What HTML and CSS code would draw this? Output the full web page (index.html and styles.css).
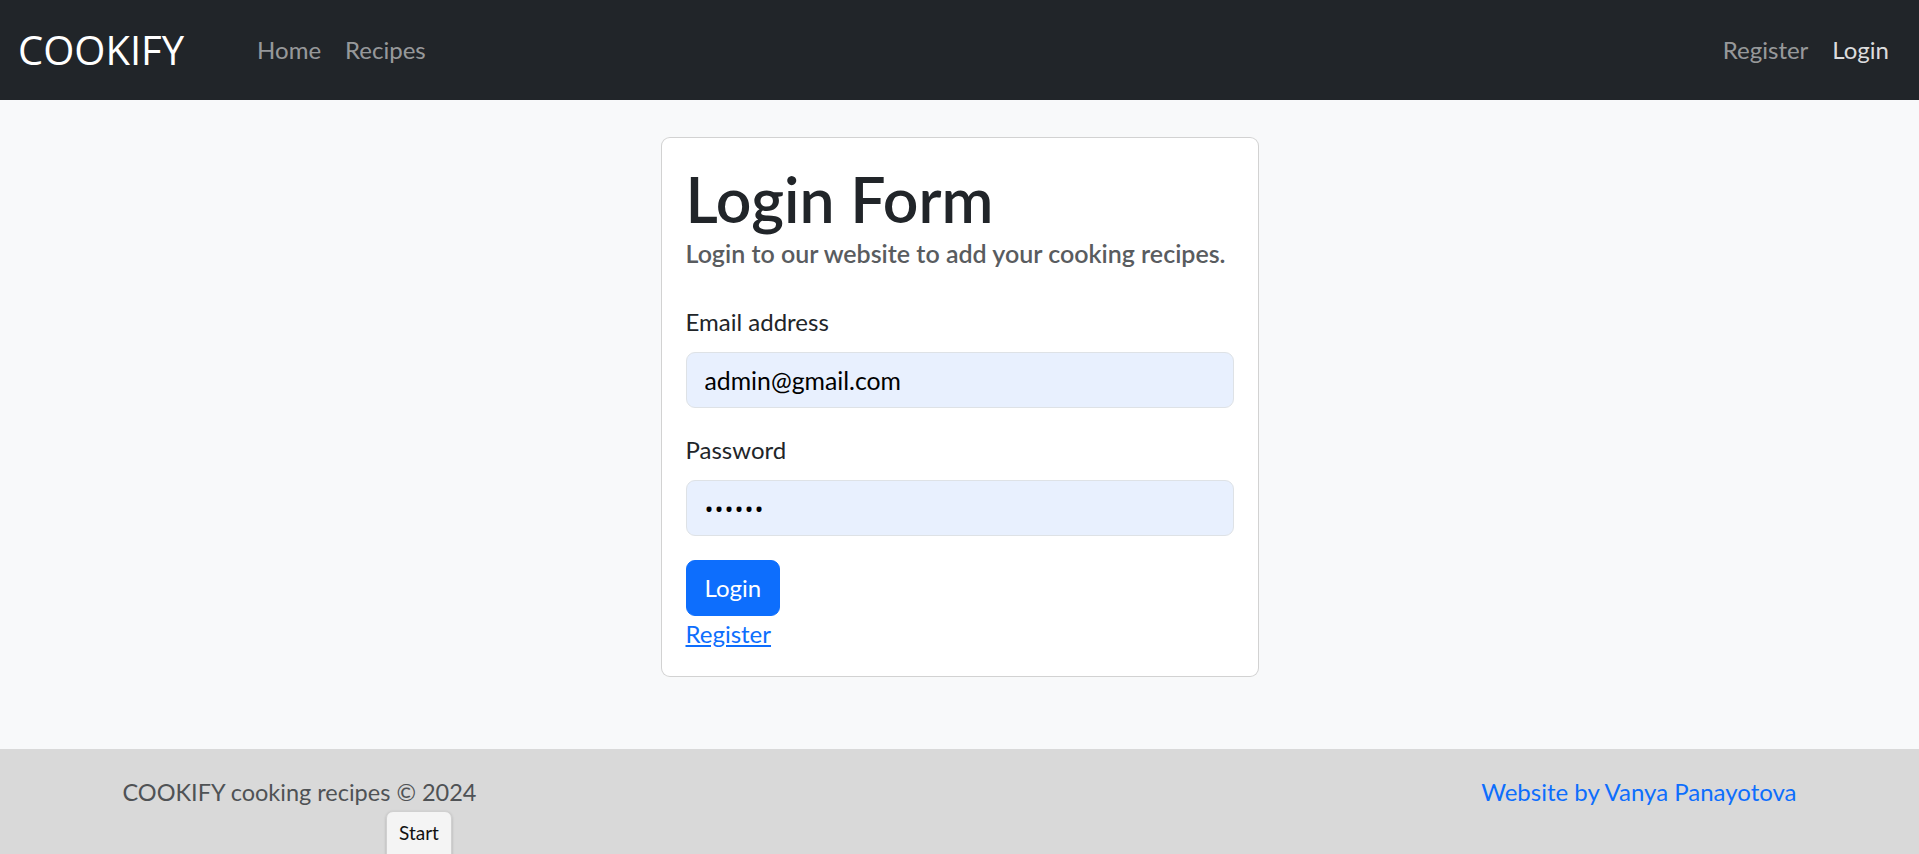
FILE: index.html
```html
<!DOCTYPE html>
<html lang="en">
<head>
<meta charset="utf-8">
<title>COOKIFY - Login</title>
<link rel="stylesheet" href="styles.css">
</head>
<body>
<nav class="navbar">
  <a class="brand" href="#">COOKIFY</a>
  <ul class="nav">
    <li><a class="nav-link" href="#">Home</a></li>
    <li><a class="nav-link" href="#">Recipes</a></li>
  </ul>
  <ul class="nav nav-right">
    <li><a class="nav-link" href="#">Register</a></li>
    <li><a class="nav-link active" href="#">Login</a></li>
  </ul>
</nav>
<main class="main">
  <div class="card">
    <h1 class="title">Login Form</h1>
    <p class="subtitle">Login to our website to add your cooking recipes.</p>
    <form class="form">
      <div class="field">
        <label class="label" for="email">Email address</label>
        <input class="input" id="email" type="email" value="admin@gmail.com">
      </div>
      <div class="field">
        <label class="label" for="password">Password</label>
        <input class="input input-password" id="password" type="password" value="123456">
      </div>
      <button class="btn" type="button">Login</button>
    </form>
    <a class="link" href="#">Register</a>
  </div>
</main>
<footer class="footer">
  <div class="footer-inner">
    <span class="footer-copy">COOKIFY cooking recipes © 2024</span>
    <a class="footer-link" href="#">Website by Vanya Panayotova</a>
  </div>
</footer>
<div class="start-btn">Start</div>
</body>
</html>
```
FILE: styles.css
```css
html, body {
  margin: 0;
  padding: 0;
}
body {
  font-family: Lato, "Open Sans", sans-serif;
  font-size: 24px;
  line-height: 36px;
  color: #212529;
  background: #f8f9fa;
  overflow: hidden;
  position: relative;
  min-height: 854px;
}
a { text-decoration: none; }

.navbar {
  height: 100px;
  box-sizing: border-box;
  background: #212529;
  display: flex;
  align-items: center;
  padding: 0 18px;
}
.brand {
  color: #fff;
  font-family: "Open Sans", sans-serif;
  font-size: 40px;
  font-weight: 400;
  line-height: 60px;
  margin-right: 61px;
}
.nav {
  list-style: none;
  margin: 0;
  padding: 0;
  display: flex;
}
.nav-right { margin-left: auto; }
.nav-link {
  display: block;
  padding: 0 12px;
  color: rgba(255, 255, 255, 0.55);
  line-height: 36px;
}
.nav-link.active { color: rgba(255, 255, 255, 0.85); }

.main {
  display: flex;
  justify-content: center;
  padding: 37px 0 72px;
}
.card {
  width: 598px;
  box-sizing: border-box;
  background: #fff;
  border: 1px solid rgba(0, 0, 0, 0.175);
  border-radius: 9px;
  padding: 25px 24px 24px;
}
.title {
  margin: 0;
  font-size: 62.5px;
  line-height: 72px;
  font-weight: 600;
}
.subtitle {
  margin: 0 0 33px;
  font-size: 25px;
  font-weight: 600;
  color: #595c5f;
}
.form { margin: 0; }
.field { margin-bottom: 24px; }
.label {
  display: block;
  margin-bottom: 12px;
}
.input {
  display: block;
  width: 100%;
  height: 56px;
  box-sizing: border-box;
  padding: 0 18px;
  border: 1px solid #dee2e6;
  border-radius: 9px;
  background: #e8f0fe;
  color: #000;
  font: inherit;
  font-size: 24.8px;
  outline: none;
}
.input-password {
  font-family: "Open Sans", sans-serif;
  font-size: 24px;
  letter-spacing: 1px;
}
.btn {
  display: block;
  height: 56px;
  padding: 0 18px;
  border: 1px solid #0d6efd;
  border-radius: 9px;
  background: #0d6efd;
  color: #fff;
  font: inherit;
  line-height: 36px;
}
.link {
  display: block;
  color: #0d6efd;
  text-decoration: underline;
  width: max-content;
}

.footer {
  background: #d9d9d9;
  padding: 25px 0 44px;
}
.footer-inner {
  max-width: 1710px;
  margin: 0 auto;
  padding: 0 18px;
  box-sizing: border-box;
  display: flex;
  justify-content: space-between;
}
.footer-copy {
  color: #4f5255;
  font-size: 23.5px;
}
.footer-link { color: #0d6efd; }

.start-btn {
  position: absolute;
  left: 386px;
  top: 811px;
  width: 66px;
  height: 60px;
  box-sizing: border-box;
  padding-top: 8px;
  text-align: center;
  font-size: 19px;
  line-height: 26px;
  color: #111;
  background: #f4f4f4;
  border: 1px solid #d0d0d0;
  border-radius: 7px;
  box-shadow: 0 1px 3px rgba(0, 0, 0, 0.2);
}
```
